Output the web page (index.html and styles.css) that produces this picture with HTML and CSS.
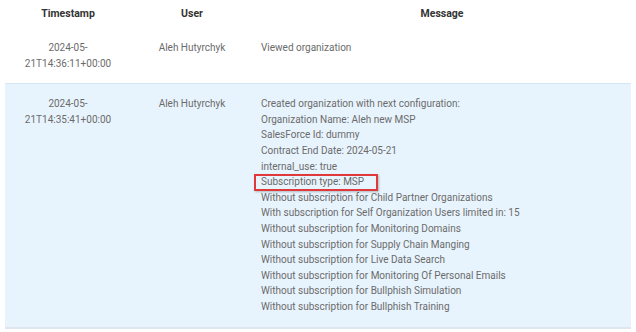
FILE: index.html
```html
<!DOCTYPE html>
<html lang="en">
<head>
    <meta charset="utf-8" />
    <title>Audit log</title>
    <link rel="stylesheet" href="styles.css">
</head>
<body>
    <table class="log-table">
        <thead>
            <tr>
                <th class="col-time">Timestamp</th>
                <th class="col-user">User</th>
                <th class="col-message">Message</th>
            </tr>
        </thead>
        <tbody>
            <tr class="log-row">
                <td class="cell-time">2024-05-<br />21T14:36:11+00:00</td>
                <td class="cell-user">Aleh Hutyrchyk</td>
                <td class="cell-message">Viewed organization</td>
            </tr>
            <tr class="log-row selected">
                <td class="cell-time">2024-05-<br />21T14:35:41+00:00</td>
                <td class="cell-user">Aleh Hutyrchyk</td>
                <td class="cell-message">
                    <div>Created organization with next configuration:</div>
                    <div>Organization Name: Aleh new MSP</div>
                    <div>SalesForce Id: dummy</div>
                    <div>Contract End Date: 2024-05-21</div>
                    <div>internal_use: true</div>
                    <div><span class="highlight">Subscription type: MSP</span></div>
                    <div>Without subscription for Child Partner Organizations</div>
                    <div>With subscription for Self Organization Users limited in: 15</div>
                    <div>Without subscription for Monitoring Domains</div>
                    <div>Without subscription for Supply Chain Manging</div>
                    <div>Without subscription for Live Data Search</div>
                    <div>Without subscription for Monitoring Of Personal Emails</div>
                    <div>Without subscription for Bullphish Simulation</div>
                    <div>Without subscription for Bullphish Training</div>
                </td>
            </tr>
        </tbody>
    </table>
</body>
</html>
```

FILE: styles.css
```css
body {
    margin: 0;
    background: #ffffff;
    font-family: Roboto, "Liberation Sans", sans-serif;
}

.log-table {
    margin-left: 5px;
    width: 626px;
    border-collapse: collapse;
    table-layout: fixed;
    font-size: 10px;
    line-height: 15.6px;
    color: #6b6b6b;
}

.log-table th {
    height: 28px;
    padding: 0;
    font-size: 10.5px;
    font-weight: bold;
    color: #333333;
    text-align: center;
    vertical-align: middle;
}

.col-time {
    width: 126px;
}

.col-user {
    width: 122px;
}

.log-row td {
    padding: 12px 8px 12px 8px;
    vertical-align: top;
}

.log-row .cell-time,
.log-row .cell-user {
    text-align: center;
}

.log-row.selected {
    background: #e8f4fd;
    border-top: 1px solid #d4e7f6;
    border-bottom: 2px solid #dfe6ee;
}

    .log-row.selected td {
        padding-top: 12px;
        padding-bottom: 12px;
    }

.highlight {
    position: relative;
    display: inline-block;
}

    .highlight::after {
        content: "";
        position: absolute;
        left: -7px;
        right: -14px;
        top: 0;
        bottom: -1px;
        border: 2px solid #e0383b;
        box-shadow: 1px 1px 2px rgba(0, 0, 0, 0.25);
    }
```
